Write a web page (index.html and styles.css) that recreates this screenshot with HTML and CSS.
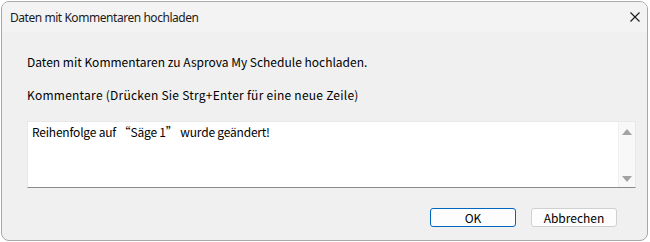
FILE: index.html
```html
<!DOCTYPE html>
<html lang="de">
<head>
<meta charset="utf-8">
<link rel="stylesheet" href="styles.css">
</head>
<body>
<div class="window">
  <div class="titlebar">
    <span class="title">Daten mit Kommentaren hochladen</span>
    <svg class="close" width="10" height="10" viewBox="0 0 10 10"><path d="M0.5 0.5 L9.5 9.5 M9.5 0.5 L0.5 9.5" stroke="#1a1a1a" stroke-width="1.1" fill="none"/></svg>
  </div>
  <div class="content">
    <p class="line first">Daten mit Kommentaren zu Asprova My Schedule hochladen.</p>
    <p class="line second">Kommentare (Drücken Sie Strg+Enter für eine neue Zeile)</p>
    <div class="textbox">
      <div class="text">Reihenfolge auf <span class="q" lang="ja">“</span>Säge 1<span class="q" lang="ja">”</span> wurde geändert!</div>
      <div class="scrollbar">
        <span class="arrow up"></span>
        <span class="arrow down"></span>
      </div>
    </div>
    <div class="buttons">
      <button class="btn primary">OK</button>
      <button class="btn">Abbrechen</button>
    </div>
  </div>
</div>
</body>
</html>
```
FILE: styles.css
```css
html, body { margin: 0; padding: 0; }
body {
  width: 650px; height: 242px;
  background: #ffffff;
  overflow: hidden;
}
.window {
  margin: 1px 0 0 1px;
  width: 645px; height: 238px;
  border: 1px solid #a8a8a8;
  border-radius: 8px;
  background: #f0f0f0;
  overflow: hidden;
  display: flex; flex-direction: column;
}
.titlebar {
  height: 30px;
  background: #f3f3f3;
  display: flex; align-items: center; justify-content: space-between;
  padding: 0 7px 0 8px;
}
.title {
  font-family: "Segoe UI", "Noto Sans", sans-serif;
  font-size: 12px;
  letter-spacing: -0.45px;
  color: #1b1b1b;
}
.content {
  flex: 1;
  padding: 0 11px 0 25px;
  display: flex; flex-direction: column;
  font-family: "Noto Sans CJK JP", sans-serif;
  font-size: 12px;
  color: #000;
}
.line { margin: 0; line-height: 14px; }
.first { margin-top: 23px; }
.second { margin-top: 19px; letter-spacing: 0.25px; }
.textbox {
  margin-top: 19px;
  height: 65px;
  background: #fff;
  border: 1px solid #e8e8e8;
  border-bottom: 1px solid #8a8a8a;
  display: flex;
}
.text { flex: 1; padding: 3px 4px; line-height: 14px; letter-spacing: -0.2px; }
.q { font-family: "Noto Sans CJK JP", sans-serif; font-feature-settings: "fwid" 1; letter-spacing: 0; }
.scrollbar {
  width: 16px;
  background: #f8f8f8;
  border-left: 1px solid #f0f0f0;
  display: flex; flex-direction: column; justify-content: space-between; align-items: center;
  padding: 7px 0 5px;
}
.arrow { width: 0; height: 0; border-left: 5px solid transparent; border-right: 5px solid transparent; }
.up { border-bottom: 6px solid #a3a3a3; }
.down { border-top: 6px solid #a3a3a3; }
.buttons {
  margin-top: 20px;
  display: flex; justify-content: flex-end; gap: 15px;
  padding-right: 19px;
}
.btn {
  width: 86px; height: 19px;
  font-family: "Noto Sans CJK JP", sans-serif;
  font-size: 12px;
  color: #000;
  background: #fdfdfd;
  border: 1px solid #d0d0d0;
  border-radius: 3px;
  padding: 0;
  line-height: 16px;
}
.btn.primary { border-color: #0067c0; }
```
